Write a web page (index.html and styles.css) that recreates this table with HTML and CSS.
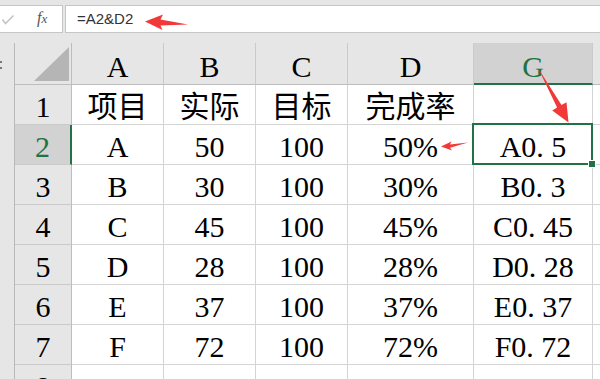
FILE: index.html
```html
<!DOCTYPE html>
<html lang="zh-CN">
<head>
<meta charset="utf-8">
<title>Excel</title>
<link rel="stylesheet" href="styles.css">
</head>
<body>
<div class="app">
  <div class="fbar">
    <div class="fbtns">
      <svg class="check" width="14" height="12" viewBox="0 0 14 12"><polyline points="1.5,5.5 4.5,9.5 12.5,1.5" fill="none" stroke="#c4c4c4" stroke-width="1.6"/></svg>
      <span class="fx"><span class="fx-f">f</span><span class="fx-x">x</span></span>
    </div>
    <div class="finput">=A2&amp;D2</div>
  </div>
  <div class="sheet">
    <div class="strip"><span class="grip"></span></div>
    <div class="corner"><svg width="35" height="34" viewBox="0 0 35 34"><polygon points="0,34 35,0 35,34" fill="#b5b5b5"/></svg></div>
    <div class="ch">A</div><div class="ch">B</div><div class="ch">C</div><div class="ch">D</div><div class="ch ch-sel">G</div><div class="ch ch-end"></div>

    <div class="rh">1</div>
    <div class="c">项目</div><div class="c">实际</div><div class="c">目标</div><div class="c">完成率</div><div class="c"></div><div class="c c-end"></div>

    <div class="rh rh-sel">2</div>
    <div class="c">A</div><div class="c">50</div><div class="c">100</div><div class="c">50%</div><div class="c c-active">A0<span class="dot">.</span>5<span class="sel"><span class="handle"></span></span></div><div class="c c-end"></div>

    <div class="rh">3</div>
    <div class="c">B</div><div class="c">30</div><div class="c">100</div><div class="c">30%</div><div class="c">B0<span class="dot">.</span>3</div><div class="c c-end"></div>

    <div class="rh">4</div>
    <div class="c">C</div><div class="c">45</div><div class="c">100</div><div class="c">45%</div><div class="c">C0<span class="dot">.</span>45</div><div class="c c-end"></div>

    <div class="rh">5</div>
    <div class="c">D</div><div class="c">28</div><div class="c">100</div><div class="c">28%</div><div class="c">D0<span class="dot">.</span>28</div><div class="c c-end"></div>

    <div class="rh">6</div>
    <div class="c">E</div><div class="c">37</div><div class="c">100</div><div class="c">37%</div><div class="c">E0<span class="dot">.</span>37</div><div class="c c-end"></div>

    <div class="rh">7</div>
    <div class="c">F</div><div class="c">72</div><div class="c">100</div><div class="c">72%</div><div class="c">F0<span class="dot">.</span>72</div><div class="c c-end"></div>

    <div class="rh">8</div>
    <div class="c"></div><div class="c"></div><div class="c"></div><div class="c"></div><div class="c"></div><div class="c c-end"></div>
  </div>
  <svg class="arrows" width="600" height="379" viewBox="0 0 600 379">
    <polygon points="145,21.5 163,14.5 160.5,19.5 188,24.5 160.5,25.5 162.5,30" fill="#f2393a"/>
    <polygon points="441,146.5 451.5,141.5 450,144.5 468,142.5 450,147.8 452,150.5" fill="#f2393a"/>
    <polygon points="538,68 561.5,105.1 566.5,102.2 568.5,122.5 552.2,110.4 557.1,107.5" fill="#f2393a"/>
  </svg>
</div>
</body>
</html>
```
FILE: styles.css
```css
html, body {
  margin: 0;
  padding: 0;
}
body {
  background: #e6e6e6;
  width: 600px;
  height: 379px;
  overflow: hidden;
}
.app {
  position: relative;
  width: 600px;
  height: 379px;
  overflow: hidden;
  background: #e6e6e6;
}
.fbar {
  display: flex;
  gap: 2px;
  height: 28px;
  margin-top: 5px;
  box-sizing: border-box;
}
.fbtns {
  width: 63px;
  box-sizing: border-box;
  background: #fff;
  border: 1px solid #c6c6c6;
  border-left: none;
  display: flex;
  align-items: center;
  padding-left: 1px;
}
.check {
  display: block;
  margin-top: 1px;
}
.fx {
  margin-left: 22px;
  font-family: "Liberation Serif", serif;
  font-style: italic;
  color: #555;
  font-size: 16px;
  line-height: 16px;
  margin-top: -1px;
}
.fx-x {
  font-size: 13px;
}
.finput {
  flex: 1;
  box-sizing: border-box;
  background: #fff;
  border: 1px solid #c6c6c6;
  border-right: none;
  font-family: "Liberation Sans", Arial, sans-serif;
  font-size: 15px;
  color: #333;
  padding-left: 11px;
  line-height: 25px;
}
.sheet {
  margin-top: 10px;
  display: grid;
  grid-template-columns: 15px 57px 92px 92px 92px 126px 119px 1fr;
  grid-template-rows: 42px repeat(7, 40px) 40px;
  font-family: "Liberation Serif", "Noto Sans CJK SC", serif;
  font-size: 30px;
  line-height: 30px;
  color: #000;
}
.strip {
  grid-row: 1 / -1;
  background: #e6e6e6;
  border-right: 1px solid #b9b9b9;
  position: relative;
}
.grip {
  position: absolute;
  left: 0;
  top: 18px;
  width: 2px;
  height: 2px;
  background: #777;
  box-shadow: 0 6px 0 #777;
}
.corner {
  background: #e6e6e6;
  border-right: 1px solid #bdbdbd;
  border-bottom: 1px solid #bdbdbd;
  display: flex;
  align-items: flex-end;
  justify-content: flex-end;
  padding: 0 2px 3px 0;
  box-sizing: border-box;
}
.corner svg {
  display: block;
}
.ch, .rh, .c {
  box-sizing: border-box;
  display: flex;
  align-items: flex-end;
  justify-content: center;
  padding-bottom: 2px;
  white-space: nowrap;
}
.ch {
  background: #e6e6e6;
  border-right: 1px solid #cacaca;
  border-bottom: 1px solid #bdbdbd;
}
.ch-sel {
  background: #d2d2d2;
  color: #217346;
  border-bottom: 2px solid #217346;
  padding-bottom: 1px;
}
.ch-end {
  border-right: none;
}
.rh {
  background: #e6e6e6;
  border-right: 1px solid #bdbdbd;
  border-bottom: 1px solid #cacaca;
}
.rh-sel {
  background: #d2d2d2;
  color: #217346;
  border-right: 2px solid #217346;
}
.c {
  background: #fff;
  border-right: 1px solid #d4d4d4;
  border-bottom: 1px solid #d4d4d4;
}
.c-end {
  border-right: none;
}
.c-active {
  position: relative;
}
.dot {
  display: inline-block;
  width: 15px;
  text-align: left;
}
.sel {
  position: absolute;
  left: -2px;
  top: -2px;
  right: -1px;
  bottom: -1px;
  border: 2px solid #217346;
  pointer-events: none;
}
.handle {
  position: absolute;
  right: -5px;
  bottom: -5px;
  width: 6px;
  height: 6px;
  background: #217346;
  border: 1px solid #fff;
}
.arrows {
  position: absolute;
  left: 0;
  top: 0;
  pointer-events: none;
}
```
